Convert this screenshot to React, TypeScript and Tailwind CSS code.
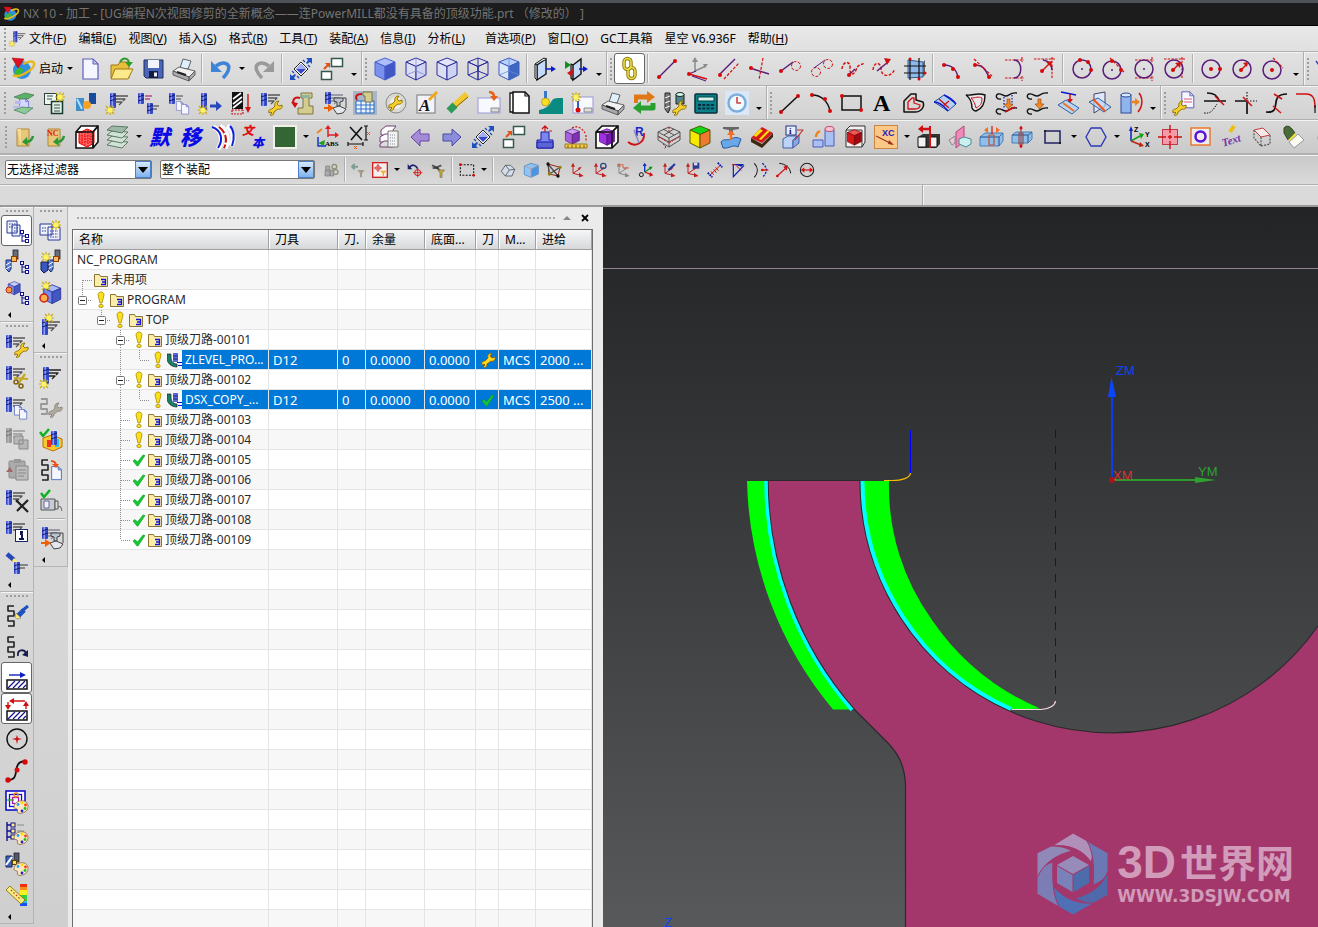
import React from 'react';

/* ---------- drawing primitives for the 24x24 icons ---------- */
type AP = { d: string; c?: string; w?: number; f?: string; dash?: string };
const A = ({ d, c = '#111', w = 1.2, f = 'none', dash }: AP) => (
  <path d={d} stroke={c} strokeWidth={w} fill={f} strokeDasharray={dash} strokeLinejoin="round" />
);
const D = ({ x, y, r = 2, c = '#d80808' }: { x: number; y: number; r?: number; c?: string }) => (
  <circle cx={x} cy={y} r={r} fill={c} />
);
const Sun = ({ x = 0, y = 0 }: { x?: number; y?: number }) => (
  <g transform={`translate(${x} ${y})`}>
    <A d="M0-5V5M-5 0H5M-4-4 4 4M4-4-4 4" c="#c9a800" w={1.1} />
    <circle r="2.6" fill="#fff45a" />
  </g>
);
const Mill = ({ x = 4, y = 2, h = 15, g = false }: { x?: number; y?: number; h?: number; g?: boolean }) => (
  <g>
    <rect x={x} y={y} width="6" height={h} rx="1" fill={g ? '#999' : '#3446c4'} />
    <rect x={x + 1.5} y={y} width="1.6" height={h} fill={g ? '#b4b4b4' : '#8ea0f4'} />
    <path
      d={`M${x} ${y + 4}l6-2M${x} ${y + 8}l6-2`}
      stroke={g ? '#777' : '#141e70'}
      strokeWidth="1"
    />
  </g>
);
const Feed = ({ x = 10, y = 5, c = '#555' }: { x?: number; y?: number; c?: string }) => (
  <A d={`M${x} ${y}h12M${x} ${y + 3}h9l-2 2M${x} ${y + 6}h6l-3 3`} c={c} w={1.3} />
);
const Wrench = ({ x = 0, y = 0, c = '#f4cf2c', s = '#8a6a00' }: { x?: number; y?: number; c?: string; s?: string }) => (
  <path
    transform={`translate(${x} ${y})`}
    d="M1 12c-1-3 1-4 3-4l3-3c-1-3 1-5 4-5l-2 3 2 2 3-1c1 3-2 5-4 4l-4 3c0 3-2 4-4 3l2-2-1-1z"
    fill={c}
    stroke={s}
    strokeWidth=".9"
  />
);
const Cube = ({ t = '#c3cff8', l = '#8397e8', r = '#4357c0', s = '#2a2f9c', k = 1, x = 0, y = 0 }) => (
  <g transform={`translate(${x} ${y}) scale(${k})`} stroke={s} strokeLinejoin="round" strokeWidth="1">
    <path d="M12 1 22 5 12 9.500 2 5z" fill={t} />
    <path d="M2 5v13l10 5V9.500z" fill={l} />
    <path d="M22 5v13l-10 5V9.500z" fill={r} />
  </g>
);
const Page = ({ x = 0, y = 0, k = 1, c = '#5a5fb8', f = '#f5f6ff' }) => (
  <g transform={`translate(${x} ${y}) scale(${k})`}>
    <path d="M1 1h10l5 5v15H1z" fill={f} stroke={c} strokeWidth="1.2" />
    <path d="M11 1v5h5z" fill="#c3c8ee" stroke={c} strokeWidth="1" />
  </g>
);
const Nodes = ({ x = 15, y = 11 }: { x?: number; y?: number }) => (
  <g transform={`translate(${x} ${y})`} stroke="#10108c" fill="#fff">
    <path d="M2 3v9M2 6h4M2 11h4" fill="none" />
    <rect x=".5" y=".5" width="3" height="3" />
    <rect x="5.500" y="4.500" width="3" height="3" />
    <rect x="5.500" y="9.500" width="3" height="3" />
  </g>
);
const Palette = () => (
  <g>
    <path d="M9 17c0-5 6-7 10-6s5 6 3 9-7 4-9 3 1-3-1-4-3 0-3-2z" fill="#fbe6c2" stroke="#8a6840" strokeWidth=".8" />
    <D x={13} y={14.500} r={1.400} c="#20a0f0" /><D x={17} y={13} r={1.400} c="#ffd800" />
    <D x={20.500} y={15} r={1.400} c="#f04010" /><D x={20} y={18.500} r={1.400} c="#20c020" />
    <D x={17} y={21} r={1.400} c="#2020d0" />
  </g>
);
const Holder = ({ x = 0, y = 0 }: { x?: number; y?: number }) => (
  <g transform={`translate(${x} ${y})`}>
    <rect x="8" y="0" width="5" height="9" fill="#666d7c" stroke="#222" strokeWidth=".8" />
    <rect x="6.500" y="6.500" width="5" height="5" fill="#f8b860" stroke="#904000" />
    <path d="M1 10h5v9l-2 3-3-3z" fill="#5a84d8" stroke="#182870" />
    <path d="m1 15 5-3m-5 7 5-3" stroke="#fff" />
  </g>
);
const Machine = ({ x = 0, y = 0 }: { x?: number; y?: number }) => (
  <g transform={`translate(${x} ${y})`} stroke="#333" strokeWidth=".9">
    <path d="M1 2h9v3l-3 1v4H4V6L1 5z" fill="#bcc4d0" />
    <path d="M0 12l6-2 7 3-3 4-6 1z" fill="#e4e8ee" />
    <path d="M10 2h3v10" fill="none" />
  </g>
);
const Axes = ({ c = '#c02020' }: { c?: string }) => (
  <g>
    <A d="M6 4v13l12 3M6 17l9-6" c={c} w={1.500} />
    <path d="m3 7 3-6 3 6zM15 16l7 5-7 2zM13 9l6-2-3 5z" fill={c} />
  </g>
);
const Swirl = () => <A d="M9 2H3v5h6v5H3m6 0H3v5h6v5H3" c="#222" w={1.600} />;
const Hatch = () => (
  <g>
    <rect x="2" y="14" width="20" height="9" fill="#fff" stroke="#111" strokeWidth="1.500" />
    <A d="m3 22 7-7m-2 7 7-7m-2 7 7-7m-2 7 3-3" c="#10108c" w={1.200} />
  </g>
);
const Printer = () => (
  <g stroke="#555" strokeWidth=".9">
    <path d="m8 11 3-9 8 2-3 8z" fill="#dff0fc" />
    <path d="m1 14 6-4 16 4-6 6z" fill="#f1f1f1" />
    <path d="m1 14 16 6v4L1 18zM17 20l6-6v4l-6 6z" fill="#a9a9ae" />
    <path d="m5 15 9 3" stroke="#222" strokeWidth="2" />
  </g>
);
const Fit = () => (
  <g>
    <path d="m12 5 7 7-7 7-7-7z" fill="#fff" stroke="#222" />
    <path d="m12 7 5 5-5 5-5-5z" fill="#3948c8" />
    <path d="M12 7l5 5H7z" fill="#a4b0f0" />
    <path d="M17 1h6v6l-2-2-3 2-1-1 2-3zM7 23H1v-6l2 2 3-2 1 1-2 3z" fill="#2050c0" />
    <A d="m14 3 2 2M19 8l2 2M3 14l2 2M8 19l2 2" c="#2050c0" w={1.300} />
  </g>
);
const Win = () => (
  <g>
    <rect x="11.500" y="1.500" width="11" height="8" fill="#fff" stroke="#34584c" strokeWidth="1.500" />
    <rect x="1.500" y="14.500" width="10" height="8" fill="#fff" stroke="#34584c" strokeWidth="1.500" />
    <A d="m4 12 4-4" c="#e05010" w={2} /><path d="M5 6h5v5z" fill="#e05010" />
  </g>
);
const RedCorner = ({ box = false }: { box?: boolean }) => (
  <A d={box ? 'M3 3h19M3 21h19M20 0v5M20 19v5' : 'M1 2h21M19 0v22'} c="#d01010" w={1.100} dash="2.500 1.200" />
);
type CP = { t: string; c?: string; s?: number; x?: number; y?: number; f?: string };
const Char = ({ t, c = '#0a0ae6', s = 22, x = 1, y = 20, f = '"Noto Sans CJK SC"' }: CP) => (
  <text x={x} y={y} fontSize={s} fontWeight="900" fill={c} fontStyle="italic" style={{ fontFamily: f + ', serif' }}>{t}</text>
);

const P = '#5a1c78';
const R = '#d01010';
const ICON: Record<string, React.ReactNode> = {
  nx: <g><circle cx="11" cy="13" r="9" fill="#2f8fe0" /><path d="M5 13c3-4 8-2 7 1s-5 3-4 7c-4-1-6-5-3-8z" fill="#39b838" /><A d="M2 18c5 4 23-6 21-12-1-3-7-1-11 1" c="#e8b818" w={2.500} /><path d="m1 1 12 1-6 9z" fill="#e01020" stroke="#900" strokeWidth=".5" /></g>,
  new: <Page x={3} y={1} />,
  open: <g><path d="M1 8h7l2-3h9v16H1z" fill="#e7bf3c" stroke="#a07810" /><path d="M5 12h18l-5 10H1z" fill="#fbe98c" stroke="#a07810" /><A d="M10 5c3-5 8-4 9 0" c="#2e9c28" w={2} /><path d="M15 5h8l-4 5z" fill="#2e9c28" /></g>,
  save: <g><path d="M3 3h19v18H5l-2-2z" fill="#4b66b8" stroke="#1c2c5c" /><rect x="7" y="3" width="11" height="8" fill="#f2f4fc" /><rect x="8" y="14" width="9" height="7" fill="#111c40" /><rect x="13" y="15.500" width="3" height="4" fill="#eee" /></g>,
  print: <Printer />,
  undo: <g><A d="M7 9c8-6 15-2 12 5-1 3-3 5-5 7" c="#3d83d8" w={3.500} /><path d="M2 4v11h11z" fill="#3d83d8" /></g>,
  redo: <g><A d="M17 9C9 3 2 7 5 14c1 3 3 5 5 7" c="#9a9a9a" w={3.500} /><path d="M22 4v11H11z" fill="#9a9a9a" /></g>,
  fit: <Fit />,
  win: <Win />,
  cube1: <Cube t="#aebefa" l="#7a91ee" r="#4257c4" s="#4660d0" />,
  cube2: <g><Cube t="#e3e4f8" l="#dcdef4" r="#cfd3ef" /><A d="M2 18l10-4 10 4M12 14V1" c="#8a8ad0" w={.8} /></g>,
  cube3: <Cube t="#e3e4f8" l="#dcdef4" r="#cfd3ef" />,
  cube4: <g><Cube t="none" l="none" r="none" /><A d="M2 18l10-4 10 4M12 14V1" c="#2a2f9c" w={1} /></g>,
  cube5: <g><Cube t="#b7d2fa" l="#dbe8fc" r="#3e68c0" s="#3a5cc0" /><A d="M2 18l10-4 10 4M12 14V1" c="#6a8ad8" w={.8} /></g>,
  door: <g><path d="M3 8l9-6v15l-9 6z" fill="#c5d9fb" stroke="#111" strokeWidth="1.400" /><path d="M3 8 1 7v14l2 2zM12 2l-2-1-9 6" fill="#fff" stroke="#111" /><A d="M12 12h8" c="#0a18c8" w={1.500} /><path d="m17 9 5 3-5 3z" fill="#0a18c8" /></g>,
  door2: <g><path d="M8 8l8-6v15l-8 6z" fill="#c5d9fb" stroke="#111" strokeWidth="1.400" /><A d="M8 8 6 7v14l2 2" /><A d="M14 12h7" c="#0a18c8" w={1.500} /><path d="m18 9 5 3-5 3z" fill="#0a18c8" /><path d="m0 4 6 4-6 4z" fill="#109020" /><path d="m8 12-6 4 5 4z" fill="#d81010" /></g>,
  chain: <g fill="none" stroke="#8c7c08" strokeWidth="3.400"><rect x="6" y="1.500" width="7" height="11" rx="3.500" /><rect x="10" y="10.500" width="7" height="11" rx="3.500" /><g stroke="#ece04c" strokeWidth="1.500"><rect x="6" y="1.500" width="7" height="11" rx="3.500" /><rect x="10" y="10.500" width="7" height="11" rx="3.500" /></g></g>,
  line: <g><A d="M4 20 20 4" c={P} w={1.500} /><D x={4} y={20} /><D x={20} y={4} /></g>,
  axl: <g><A d="M9 14V3M9 14l11-5" c="#8c8c8c" w={1.500} /><path d="m6 5 3-5 3 5zM17 7l5 0-3 4z" fill="#8c8c8c" /><A d="m3 17 18 5" c={R} w={1.500} /><A d="m6 19 14 5M3 17l7-3" c={P} /><D x={3} y={17} /></g>,
  para: <g><A d="M2 18 18 2" c={P} w={1.500} /><A d="M7 22 22 6" c={R} dash="3 1.500" /><D x={3} y={18} /></g>,
  perp: <g><A d="M2 11l19 6" c={P} w={1.500} /><A d="M15 1 11 23" c={R} dash="3 1.500" /><D x={3} y={11} /></g>,
  tanc: <g><circle cx="17" cy="9" r="4.500" fill="none" stroke={R} strokeDasharray="3 1.500" /><A d="M2 14 14 5" c={P} w={1.500} /><D x={2} y={14} /></g>,
  tan2: <g stroke={R} fill="none" strokeDasharray="3 1.500"><circle cx="6" cy="15" r="4.500" /><circle cx="18" cy="7" r="4.500" /><path d="M4 11 15 3" stroke={P} strokeDasharray="none" /></g>,
  cur1: <g><A d="M1 12C2 3 10 4 9 11s4 8 6 2 4-4 8-7" c={R} dash="3 1.500" w={1.400} /><A d="m8 18 6-6" c={P} w={1.500} /><D x={8} y={18} /></g>,
  cur2: <g><A d="M1 13C2 4 9 5 9 12s9 10 14 0" c={R} dash="3 1.500" w={1.400} /><A d="m5 14 11-9" c={P} w={1.500} /><path d="m12 1 7 1-4 6z" fill={R} /></g>,
  mesh: <g><path d="M5 3l15 2v15L5 21z" fill="#8fb9ea" stroke="#335a90" /><path d="M20 5l2-2v15l-2 2z" fill="#666" /><A d="M7 1v22M16 1v22M1 9h22M1 16h22" c="#111" /><D x={7} y={2} r={1.500} /><D x={16} y={22} r={1.500} /><D x={22} y={16} r={1.500} /></g>,
  arc3: <g><A d="M4 8c8 0 13 5 14 13" c={P} w={1.500} /><D x={4} y={8} /><D x={13} y={12} /><D x={18} y={20} /></g>,
  arct: <g><A d="M4 8c8 0 11 5 14 12" c={P} w={1.500} /><A d="m3 2 18 17" c={R} dash="3 1.500" /><D x={4} y={8} /><D x={18} y={20} /></g>,
  arcb: <g><RedCorner box /><A d="M12 3c9 0 9 18 0 18" c={P} w={1.500} /></g>,
  arcr: <g><RedCorner /><A d="M10 3c6 1 9 4 9 10" c={P} w={1.500} /><A d="m9 14 7-7" c={R} w={1.500} /><D x={9} y={14} /><path d="m13 5 6-1-1 6z" fill={R} /></g>,
  c3: <g><circle cx="12" cy="12" r="9" fill="none" stroke={P} strokeWidth="1.500" /><D x={10} y={3} /><D x={18} y={5} /><D x={21} y={13} /><D x={12} y={12} r={1} c={P} /></g>,
  ct: <g><circle cx="11" cy="13" r="9" fill="none" stroke={P} strokeWidth="1.500" /><A d="M9 1l14 14" c={R} dash="3 1.500" /><D x={11} y={4} /><D x={20} y={13} /><D x={11} y={13} r={1} c={P} /></g>,
  cb: <g><RedCorner box /><circle cx="12" cy="12" r="9" fill="none" stroke={P} strokeWidth="1.500" /><D x={12} y={12} r={1} c={P} /></g>,
  cr: <g><RedCorner /><circle cx="11" cy="12" r="9" fill="none" stroke={P} strokeWidth="1.500" /><A d="m10 13 7-7" c={R} w={1.500} /><D x={10} y={13} /><path d="m12 6 6-1-1 6z" fill={R} /></g>,
  cc: <g><circle cx="11" cy="12" r="9" fill="none" stroke={P} strokeWidth="1.500" /><D x={11} y={12} /><D x={20} y={12} /></g>,
  cd: <g><circle cx="11" cy="12" r="9" fill="none" stroke={P} strokeWidth="1.500" /><D x={10} y={13} /><A d="m11 12 5-5" c={R} w={1.500} /><path d="m12 6 5-1-1 5z" fill={R} /></g>,
  ce: <g><circle cx="10" cy="13" r="9" fill="none" stroke={P} strokeWidth="1.500" /><D x={10} y={13} /><A d="m11 1 10 10" c={R} dash="3 1.500" /></g>,
  pen: <A d="M1 4l5 7 2 10M6 11l8-6" c="#3848b0" w={1.500} />,

  refresh: <g><Page x={7} y={7} k={.6} c="#5a5fd8" f="#d7d8ff" /><path d="M2 6l11-4 9 2-6 4H8z" fill="#5fae6a" stroke="#2f6e3a" strokeWidth=".6" /><path d="M2 19l8-3 11 1-8 6z" fill="#8fc89a" stroke="#2f6e3a" strokeWidth=".6" /><path d="M3 10h6v3H3zM1 15h7v2H1z" fill="#b8b8f0" /></g>,
  grids: <g><rect x="1.500" y="2.500" width="12" height="11" fill="#eef4ee" stroke="#30403c" /><rect x="8.500" y="10.500" width="11" height="12" fill="#e3efe6" stroke="#14382c" strokeWidth="1.500" /><A d="M4 5h6M4 8h5M11 14h6M11 17h6M11 20h6" c="#30504a" /><Sun x={17} y={6} /></g>,
  toolcol: <g><path d="M2 7h8v13H2z" fill="#3f8ec8" /><path d="M15 2h7v11h-7z" fill="#174c9c" /><path d="M3 8l5 10" stroke="#b0e0ff" strokeWidth="2" /><circle cx="13" cy="14" r="4" fill="#f8a020" /></g>,
  mill1: <g><Mill x={5} /><Feed x={11} y={5} /><Sun x={5} y={19} /></g>,
  mill2: <g><Mill x={2} h={11} /><A d="M9 5h7M9 8h5" c="#a06" /><Mill x={11} y={12} h={11} /><A d="M17 15h6M17 18h4" c="#333" /></g>,
  mill3: <g><Mill x={2} h={11} /><A d="M9 5h7M9 8h5" c="#444" /><Page x={9} y={10} k={.45} /><Page x={14} y={13} k={.48} /></g>,
  mill4: <g><Mill x={3} y={2} h={17} /><Sun x={5} y={19} /><A d="M12 15h8" c="#2848c0" w={3} /><path d="m18 10 6 5-6 5z" fill="#2848c0" /></g>,
  zig: <g><rect x="3" y="1" width="11" height="17" fill="#111" /><A d="m4 8 8-6M4 13l9-7M4 17l9-7" c="#fff" w={1.600} /><A d="M3 19v4h11v-4M3 19h11" c={R} dash="2 1" /><A d="M19 3v15" c={R} w={1.400} /><path d="m16 16 6 0-3 6z" fill={R} /></g>,
  millw: <g><Mill x={1} h={13} /><Feed x={8} y={4} /><Wrench x={8} y={10} /></g>,
  mach1: <g><path d="M10 2h11v5h-3v8h4v8H7v-6h5V7h-2z" fill="#d5cd90" stroke="#7a7440" /><rect x="11" y="4" width="8" height="3" fill="#88b6a0" /><A d="M9 7c-6-2-8 3-6 6" c={R} w={2} /><path d="m0 11 7 1-3 5z" fill={R} /></g>,
  mach2: <g><Mill x={3} y={1} h={12} /><Feed x={9} y={4} c="#889" /><Machine x={11} y={5} /><A d="M2 17h6" c="#f06000" w={2} /><path d="m6 13 6 4-6 4z" fill="#f06000" /></g>,
  mach3: <g><rect width="24" height="24" fill="#a9b6c8" /><path d="M3 10h18v12H3z" fill="#eaf2ff" stroke="#2468c0" /><A d="M3 14h18M3 18h18M8 10v12M13 10v12M17 10v12" c="#2468c0" w={.9} /><path d="M10 1h9v10h-7V5h-2z" fill="#d5cd90" stroke="#7a7440" /><A d="M9 3C3 3 2 6 4 9" c={R} w={2} /></g>,
  gearw: <g><circle cx="12" cy="12" r="10" fill="#d9d9d4" stroke="#888" /><circle cx="12" cy="12" r="6" fill="#eee" /><Wrench x={4} y={5} /></g>,
  annot: <g><rect x="2" y="4" width="18" height="18" fill="#f3f3fb" stroke="#777" /><Char t="A" c="#111" s={17} x={4} y={20} f='"Liberation Serif"' /><A d="m14 9 8-8" c="#f0a818" w={3} /></g>,
  eraser: <g><A d="M8 15 21 3" c="#f0c830" w={6} /><A d="m3 20 6-6" c="#2d9a58" w={7} /><A d="M10 16 22 6" c="#806010" w={1} /></g>,
  dwg: <g><rect x="1" y="7" width="22" height="15" fill="#f8f8ff" stroke="#9898d8" /><path d="M14 17h8v4h-8z" fill="#ddd" stroke="#777" strokeWidth=".8" /><A d="M12 1c4 0 5 2 5 5" c="#e86010" w={2.500} /><path d="m13 5 8 0-4 5z" fill="#e86010" /></g>,
  pages: <g><path d="M2 2h12v19H2z" fill="#fff" stroke="#111" strokeWidth="1.300" /><path d="M5 1h12l4 4v17H5z" fill="#fff" stroke="#111" strokeWidth="1.500" /><A d="M17 1v4h4" /></g>,
  teal: <g><path d="M0 23V19c6-1 10-4 12-8s4-4 12-4v16z" fill="#0a8a80" /><path d="M5 0h3v8H5z" fill="#3a78c8" /><circle cx="6.500" cy="11" r="4" fill="#f8e020" stroke="#a08000" strokeWidth=".6" /></g>,
  sunpg: <g><rect x="3" y="6" width="20" height="16" fill="#f8f8ff" stroke="#9898d8" /><Sun x={6} y={6} /><path d="M14 17h8v4h-8z" fill="#ddd" stroke="#777" strokeWidth=".8" /><A d="M8 10v8" c="#3060d0" w={2} /><D x={8} y={19} r={2.500} /></g>,
  swap: <g><A d="M2 6h14" c="#e07818" w={5} /><path d="m15 0 8 6-8 6z" fill="#e07818" /><path d="M2 6v6h4V6z" fill="#e07818" /><A d="M8 17h13v-5" c="#2aa030" w={5} /><path d="m9 10-8 7 8 6z" fill="#2aa030" /></g>,
  tools: <g><path d="M2 2h5v16l-2 4-3-4z" fill="#777" stroke="#222" /><path d="m2 7 5-2m-5 7 5-2m-5 7 5-2" stroke="#fff" /><path d="M13 3h8v10h-8z" fill="#50848c" stroke="#222" /><ellipse cx="17" cy="3.500" rx="4" ry="2" fill="#cfe" stroke="#222" /><Wrench x={9} y={10} /></g>,
  calc: <g><rect x="1" y="3" width="22" height="19" rx="1" fill="#0c8088" stroke="#06303c" strokeWidth="1.500" /><rect x="4" y="6" width="16" height="4" fill="#d4f0ec" stroke="#044" /><A d="M4 14h16M4 17.500h16" c="#062c40" w={2.200} dash="3 1.300" /></g>,
  clock: <g><rect width="24" height="24" fill="#dbe6f6" /><circle cx="12" cy="12" r="8.500" fill="#f4fbff" stroke="#7cb0dc" strokeWidth="2.500" /><A d="M12 6v6h4" c="#d04040" w={1.600} /></g>,
  bline: <g><A d="M3 21 20 5" c="#111" w={1.500} /><D x={3} y={21} /><D x={20} y={5} /></g>,
  barc: <g><A d="M3 4c9 0 16 6 18 16" c="#111" w={1.500} /><D x={3} y={4} /><D x={16} y={8} /><D x={21} y={20} /></g>,
  brect: <g><rect x="2" y="5" width="19" height="14" fill="none" stroke="#111" strokeWidth="1.500" /><D x={2} y={5} /><D x={21} y={19} /></g>,
  bigA: <text x="2" y="20" fontSize="24" fontWeight="700" style={{ fontFamily: '"Liberation Serif", serif' }}>A</text>,
  off1: <g><A d="M2 21V10l7-7h5v6l7 2c2 5-2 10-8 10z" w={1.500} /><A d="M6 18v-7l4-4h2v5l6 2c0 3-2 4-5 4z" c={R} w={1.300} /></g>,
  off2: <g><path d="M1 11 11 4l12 9-8 7z" fill="#b3d2f6" stroke="#2050a0" /><A d="M1 11c6 0 10 4 14 9M11 4c5 2 9 5 12 9" c="#0a18d0" w={1.500} /><A d="m6 8 10 9M10 15l6-5" c={R} w={1.400} /></g>,
  off3: <g><path d="M2 4c7 1 11-3 19 0 0 9-3 14-9 16-1 0-3-1-4-3 0-5-2-10-6-13z" fill="#e6e6ec" stroke="#111" strokeWidth="1.400" /><path d="M7 7c5 0 7-2 11 0 0 6-2 8-6 10-1-4-2-7-5-10z" fill="none" stroke={R} /></g>,
  pj1: <g><A d="M6 8C1 9 0 4 3 3s5 2 8 2 4-4 11-3M6 23c-5 1-6-4-3-5s5 2 8 2 4-4 11-3" w={1.400} /><A d="M9 6v12M17 4v13" c="#1010c0" dash="1.500 1.500" /><path d="M12 8h3v5h3l-4.500 5L9 13h3z" fill="#f08a20" stroke="#904000" strokeWidth=".6" /><A d="m10 21 10-5" c={R} w={1.500} /></g>,
  pj2: <g><A d="M6 8C1 9 0 4 3 3s5 2 8 2 4-4 11-3M6 23c-5 1-6-4-3-5s5 2 8 2 4-4 11-3" w={1.400} /><path d="M12 8h3v5h3l-4.500 5L9 13h3z" fill="#f08a20" stroke="#904000" strokeWidth=".6" /></g>,
  sf1: <g><path d="M1 14 9 9l13 8-7 6z" fill="#b9d4f4" stroke="#3060a0" /><A d="m4 1 15 3" c="#0a18d0" w={1.600} /><A d="M13 3v7" c={R} w={1.500} /><path d="m10 8 6 0-3 4z" fill={R} /><A d="m6 12 11 8" c="#f07020" w={2} /></g>,
  sf2: <g><path d="M6 3l11-2v14L6 22z" fill="#dde8f8" stroke="#446" /><path d="M1 11l9-4 13 9-7 5z" fill="#b9d4f4aa" stroke="#3060a0" /><A d="m5 8 12 12" c="#f05010" w={1.800} /></g>,
  wrapc: <g><rect x="2" y="4" width="10" height="18" fill="#8fb4ee" stroke="#2a4a98" /><ellipse cx="7" cy="4" rx="5" ry="2" fill="#dceaff" stroke="#2a4a98" /><A d="M12 11h6" c="#f08020" w={2.500} /><path d="m16 7 5 4-5 4z" fill="#f08020" /><A d="M20 2c4 5 4 13-1 19" c={R} w={1.500} /></g>,
  wpage: <g><Page x={9} y={0} k={.8} /><A d="M12 8h8M12 11h8" c="#e06070" /><Wrench x={0} y={10} /></g>,
  tr1: <g><A d="M4 2c7 0 10 2 13 9M1 10h22" w={1.600} /><A d="M1 22c7 1 9-3 13-9" dash="1.500 1.200" w={1} /><A d="m12 5 9 9" c={R} w={1.500} /></g>,
  tr2: <g><A d="M1 10h12M13 10v13" w={1.700} /><A d="M13 1v9h10" dash="1.500 1.500" /><A d="m9 6 9 9" c={R} w={1.500} /></g>,
  tr3: <g><A d="M1 21c18 2 1-18 21-18" w={1.700} /><A d="m9 3 8 5M8 15l8 7" c={R} w={1.500} /></g>,
  tr4: <g><A d="M0 3h10c8 0 9 6 9 14" c={R} w={1.500} /><A d="M19 14v8" /></g>,

  fold1: <g><path d="M4 4h12v17H4z" fill="#e8c878" stroke="#b08838" /><path d="M4 4h4v17" fill="#f4dc98" /><A d="M20 11c-1 5-4 6-8 6" c="#289838" w={2.500} /><path d="m14 12-5 5 6 4z" fill="#289838" /></g>,
  fold2: <g><path d="M4 4h12v17H4z" fill="#e8c878" stroke="#b08838" /><text x="3" y="11" fontSize="8" fontWeight="700" fill="#e02010" style={{ fontFamily: '"Liberation Serif", serif' }}>NC</text><A d="M20 11c-1 5-4 6-8 6" c="#289838" w={2.500} /><path d="m14 12-5 5 6 4z" fill="#289838" /></g>,
  redbox: <g><path d="M1 7h17v16H1zM1 7l5-6h17v16l-5 6M18 7l5-6" fill="#fff" stroke="#111" strokeWidth="1.600" /><path d="m4 8 8-4 7 3v11l-7 4-8-4z" fill="#ff6868" stroke="#e00" /><A d="M7 7v12M10 6v14M13 5v17M16 6v14M4 11h15M4 14h15M4 17h15" c="#e00" w={1} dash="1.500 1" /><A d="M1 7h17v16M18 7l5-6" w={1.400} /></g>,
  layers: <g stroke="#50705a" strokeWidth=".9" fill="#cfe2d4"><path d="m1 20 5-4 16 1-6 6z" /><path d="m1 15 5-4 16 1-6 6z" /><path d="m1 10 5-4 16 1-6 6z" /><path d="m1 5 5-4 16 1-6 6z" fill="#9db8a8" /></g>,
  mo: <Char t="默" s={21} x={0} y={20} />,
  yi: <Char t="移" s={21} x={0} y={20} />,
  ribs: <g><path d="M2 2c9 3 11 14 5 22M9 1c8 5 9 15 5 22M16 1c6 4 8 12 4 20" fill="none" stroke="#fff" strokeWidth="5" /><A d="M1 2c9 3 12 12 6 21M19 1c4 4 5 12 2 20" c="#1020d8" w={2} /><A d="M8 2c7 5 9 13 5 21" c={R} w={2} dash="8 2" /></g>,
  wenben: <g><Char t="文" c="#e01010" s={12} x={0} y={10} /><Char t="本" s={12} x={10} y={22} /></g>,
  green: <g><rect width="24" height="24" fill="#f2f0e8" /><rect x="2" y="2" width="20" height="20" fill="#346534" /></g>,
  abs: <g><A d="M12 12V2M12 10h9" c="#e02020" w={1.500} /><A d="M2 12v9h8" c="#1030d8" w={1.500} /><path d="m9 4 3-4 3 4zM19 7l4 3-4 3z" fill="#e02020" /><path d="m2 18 7-3-1 6z" fill="#20a020" /><path d="m1 8 5-4" stroke="#f08020" strokeWidth="2" /><text x="9" y="21" fontSize="7" fontWeight="700" style={{ fontFamily: '"Liberation Serif", serif' }}>ABS</text></g>,
  xdim: <g><A d="M3 2l12 13M15 2 4 15" w={1.600} /><A d="M19 1v14M17 1h4M17 15h4M1 19h15M1 17v4M16 17v4" w={1.200} /><A d="m20 7 3 3m0-3-3 3M7 21l3 3m0-3-3 3" c="#e06020" w={1} /></g>,
  books: <g><path d="M3 5l5-4h10l-3 4v5H3z" fill="#fff" stroke="#704070" /><path d="M2 12l5-3h9l-2 4v4H2z" fill="#fff" stroke="#704070" /><path d="M2 19l4-3h9v6H2z" fill="#ddd" stroke="#704070" /><path d="M10 6h10v16H10z" fill="#f4f4ee" stroke="#777" /><A d="M12 10h6M12 13h6M12 16h6M12 19h6" c="#88a" dash="1 1" /></g>,
  left: <path d="M2 12 11 4v5h9v7h-9v5z" fill="#a58ad8" stroke="#6848a8" />,
  right: <path d="M21 12 12 4v5H3v7h9v5z" fill="#8c8cdc" stroke="#4848a0" />,
  pillar: <g><path d="M8 7h8v8h4v8H4v-8h4z" fill="#7c86ee" stroke="#1a1aa8" /><path d="M4 17h16v6H4z" fill="#5a66d8" stroke="#1a1aa8" /><A d="M12 7V2M9 4l3-3 3 3M16 6h3" c={R} w={1.200} /></g>,
  cubeR: <g><Cube t="#d0a0f0" l="#a860d8" r="#8030b0" s="#502080" k={.7} x={0} y={3} /><path d="M1 19h22v4H1z" fill="#f0cc50" stroke="#906800" strokeWidth=".8" /><A d="M4 20v3M8 20v3M12 20v3M16 20v3M20 20v3" c="#704800" w={.8} /><A d="M8 3c5-3 10 0 13 5M22 10v6" c={R} dash="2 1.500" /></g>,
  purp: <g><path d="M1 7h16v16H1zM1 7l6-6h16v16l-6 6M17 7l6-6" fill="#fff" stroke="#111" strokeWidth="1.600" /><Cube t="#c058f0" l="#a030e0" r="#7818b0" s="#501080" k={.75} x={3} y={3} /><A d="M1 7h16v16M17 7l6-6" w={1.300} /></g>,
  rarc: <g><text x="9" y="11" fontSize="12" fontWeight="700" fill="#1828c8" style={{ fontFamily: '"Liberation Sans", sans-serif' }}>R</text><A d="M2 17c7 6 17 1 16-9" c={R} w={1.800} /><A d="M8 5l5 13" c="#8888c8" w={1.500} /></g>,
  wirec: <g><A d="m12 2 11 5-11 6L1 7zM1 7v8l11 7 11-7V7M12 13v9M1 11l11 6 11-6M6 4l11 6M17 4 7 10" c="#444" w={.9} /><A d="m2 12 10 6 10-6M9 22l-3-3m3 3-2 2M12 2v4" c={R} w={1} dash="2 1" /></g>,
  ygc: <Cube t="#10d818" l="#f8e800" r="#f07830" s="#506000" />,
  vise: <g><path d="M2 17c3-4 6-1 10-3s6-2 10 0l-3 8c-5-3-9 2-15 1z" fill="#68a8e8" stroke="#2858a0" /><path d="M4 2h16v2l-6 1v3h-4V5L4 4z" fill="#666" /><A d="M12 15V7" c="#f07020" w={2.500} /><path d="m8 10 4-5 4 5z" fill="#f07020" /></g>,
  swatch: <g><path d="m1 13 11-11 11 6L12 18z" fill="#d81818" /><path d="M3.500 10.500 10 4l3 1.500L6 12zM9 14 18 5l2 1-9 9z" fill="#f8e010" /><path d="m1 13 11 6L23 8v4L12 23 1 17z" fill="#3a2a10" /></g>,
  info: <g><path d="M2 14l5-3h9l-4 4v8H2z" fill="#bcd2f6" stroke="#4060a8" /><path d="M12 15l6-5v8l-6 5z" fill="#88a8e0" stroke="#4060a8" /><rect x="5" y="1" width="10" height="9" fill="#e8ecff" stroke="#203080" /><text x="8" y="9" fontSize="9" fontWeight="700" fill="#10104c" style={{ fontFamily: '"Liberation Serif", serif' }}>i</text><A d="M16 5h6l-8 10" c="#c03030" /></g>,
  cylm: <g><path d="M13 5h9v16h-9z" fill="#a8c0f4" stroke="#4a5cb8" /><ellipse cx="17.500" cy="4" rx="4.500" ry="2.500" fill="#f8c0d0" stroke="#c04060" /><path d="M1 15h10v7H1z" fill="#a8c0f4" stroke="#4a5cb8" /><A d="M4 12c0-4 2-5 4-6" c="#f08020" w={2.500} /></g>,
  redc: <g><path d="M3 5h16v17H3zM3 5l4-4h15v16l-3 5" fill="#f8f0f0" stroke="#333" /><Cube t="#f05858" l="#d81818" r="#a00810" s="#700" k={.7} x={3} y={4} /></g>,
  xc: <g><rect x=".5" y=".5" width="23" height="23" fill="#fcc888" stroke="#c88840" /><text x="8" y="11" fontSize="9" fontWeight="700" fill="#1818c0" style={{ fontFamily: '"Liberation Sans", sans-serif' }}>XC</text><A d="m2 11 16 8" c="#a03020" w={1.200} /><path d="m15 15 5 5-6-1z" fill="#a03020" /></g>,
  trm: <g><path d="M1 12l5-3h17v10l-4 4H1z" fill="#333" /><path d="M1 12h8v10H1z" fill="#f2f2f2" stroke="#111" /><path d="M13 12h7v10h-7z" fill="#f2f2f2" stroke="#111" /><A d="M3 4h9" c={R} w={2.500} /><path d="M6 0 1 4l5 4zM12 1h2v22h-2z" fill={R} /></g>,
  mir1: <g><path d="M8 7l8-6v15l-8 7z" fill="#f088b8" stroke="#b04878" /><path d="M1 15l6-4v7l-3 2z" fill="#e8c8d8" stroke="#888" /><path d="M11 14l5-2 7 2v5l-5 3-7-3z" fill="#c8f0ee" stroke="#4a8a90" /></g>,
  mir2: <g><path d="M1 12l5-4h18l-4 4zM1 12h19v9H1zM20 12l4-4v8l-4 5z" fill="#90c0ea" stroke="#3868a8" strokeWidth=".8" /><A d="M10 10h5v10h-5z" c="#c05030" /><A d="M13 1v8" c={R} /><path d="m5 5 4-3v6zM21 5l-4-3v6z" fill="#f07020" /></g>,
  mir3: <g><path d="M2 10l4-3h16l-4 3zM2 10h16v8H2zM18 10l4-3v7l-4 4z" fill="#90c0ea" stroke="#3868a8" strokeWidth=".8" /><A d="M9 8h4v11H9zM11 1v22" c="#905050" /><D x={11} y={3} r={1.500} /><D x={11} y={21} r={1.500} /></g>,
  rect: <g><rect x="4" y="6" width="15" height="12" fill="none" stroke="#202060" strokeWidth="1.500" /><rect x="3" y="5" width="2" height="2" fill="#222" /><rect x="18" y="17" width="2" height="2" fill="#222" /></g>,
  hex: <A d="M7 3h10l5 9-5 9H7l-5-9z" c="#2838b8" w={1.400} />,
  xyz: <g><A d="M4 16V4" c="#1020c0" w={1.500} /><path d="m2 6 2-5 2 5z" fill="#1020c0" /><A d="m4 16 9-5" c="#18a018" w={1.500} /><path d="m12 8 5 1-3 5z" fill="#18a018" /><A d="m4 16 10 4" c="#c02010" w={1.500} /><path d="m13 17 4 4-5 1z" fill="#c02010" /><g fontSize="7" fontWeight="700" style={{ fontFamily: '"Liberation Sans", sans-serif' }}><text x="7" y="7">Z</text><text x="18" y="12">Y</text><text x="18" y="22">X</text></g></g>,
  ctr: <g><rect x="4.500" y="4.500" width="15" height="15" fill="#f49aa8" stroke="#c03848" /><A d="M12 0v8M12 10v4M12 16v8M0 12h8M10 12h4M16 12h8" c={R} w={1.400} /></g>,
  ring: <g><rect x="2" y="3" width="19" height="17" fill="#ececec" stroke="#f06818" strokeWidth="1.300" /><circle cx="11.500" cy="11.500" r="5" fill="none" stroke="#5a10d8" strokeWidth="2.500" /></g>,
  text: <g><text x="1" y="20" fontSize="11" fontWeight="700" fontStyle="italic" fill="#7030a8" transform="rotate(-18 8 14)" style={{ fontFamily: '"Liberation Serif", serif' }}>Text</text><A d="m10 7 4-6" c="#e8c010" w={4} /></g>,
  wire2: <g><path d="m3 5 9-2 7 7-9 2z" fill="#f8e8e8" stroke="#c04040" /><A d="M3 5v8l7 8V12M10 21l9-2v-9" c="#555" dash="2 1.200" /></g>,
  lamp: <g><path d="M2 3c2-3 6-2 8 1l3 4-7 7-4-7z" fill="#4a6a3a" stroke="#304828" /><path d="m13 8-7 7 4 2 6-5z" fill="#f0e040" /><path d="m16 9-9 8 5 6 10-8z" fill="#fbfaf0" stroke="#999" /></g>,
  clip: <circle cx="12" cy="13" r="6" fill="none" stroke="#444" strokeWidth="2.500" />,

  g1: <g><path d="M4 6h6v6H4zM3 13h7v8H3zM11 12h5v9h-5z" fill="#aaa" stroke="#777" /><circle cx="17" cy="7" r="3.500" fill="none" stroke="#8f8f78" strokeWidth="2" /><circle cx="19" cy="15" r="3.500" fill="none" stroke="#8f8f78" strokeWidth="2" /></g>,
  g2: <g><A d="M12 7H3l4-4M3 7l4 4" c="#7d9c98" w={3} /><path d="M11 12h11l-4 5v6h-3v-6z" fill="#a09c88" /></g>,
  rf: <g><rect x="1" y="1" width="22" height="22" fill="#f4eeee" stroke="#d02020" strokeWidth="2" /><circle cx="9" cy="9" r="3.500" fill="none" stroke={R} /><A d="M9 3v12M3 9h12" c={R} /><path d="M12 13h10l-4 4v5h-2v-5z" fill="#f0b020" /></g>,
  snap1: <g><A d="M4 8c3-5 9-4 12 2" c="#18206c" w={2.500} /><path d="M1 3v8h7z" fill="#18206c" /><circle cx="16" cy="16" r="4.500" fill="none" stroke={R} strokeWidth="1.500" /><A d="M16 9v14M9 16h14" c={R} /></g>,
  snap2: <g><A d="M3 5l7 3 7-3M10 8l7 7" c="#555" w={3} /><A d="M4 9h8" c="#222" w={2} /><path d="M12 12h10l-4 4v7h-3v-7z" fill="#d0a838" stroke="#777040" /></g>,
  selr: <g><rect x="2" y="4" width="20" height="16" fill="none" stroke="#111" strokeWidth="1.600" strokeDasharray="3 2" /><D x={2} y={4} /><D x={22} y={20} /></g>,
  sm1: <g><path d="M2 14l6-9h8l6 6-4 10H8z" fill="#d2dcec" stroke="#333" /><path d="M8 5l6 7-6 9M14 12l8-1" fill="none" stroke="#333" /></g>,
  sm2: <g><path d="M2 6l10-4 11 3v13l-11 5-10-4z" fill="#8cc4f4" stroke="#4080c0" /><path d="M12 10l11-5v13l-11 5z" fill="#4c94e0" /><path d="M2 6l10 4 11-5M12 10v13" fill="none" stroke="#e09090" /></g>,
  sm3: <g><A d="M3 3l18 5-3 13L5 18z" c="#a02020" w={1.500} /><A d="M3 3l15 18M21 8 5 18M3 3l2 15" c="#444" w={1.800} /><D x={3} y={3} r={2.500} c="#111" /><D x={21} y={8} r={2.500} c="#908010" /><D x={18} y={21} r={2.500} c="#111" /><D x={5} y={18} r={2.500} c="#908010" /></g>,
  sa1: <Axes />,
  sa2: <g><Axes /><circle cx="17" cy="6" r="4" fill="none" stroke="#304888" strokeWidth="2" /></g>,
  sa3: <g><Axes c="#888" /><A d="M3 4h9v5M12 9h9" c="#e06040" w={1.600} /></g>,
  sa4: <g><A d="M10 15V3" c="#1030c0" w={2} /><path d="m7 6 3-5 3 5z" fill="#1030c0" /><A d="m10 15 9-6" c="#109020" w={2} /><path d="m16 7 6 0-3 5z" fill="#109020" /><A d="m10 15 10 4" c={R} w={2} /><path d="m18 15 5 5-6 2z" fill={R} /><circle cx="5" cy="19" r="3" fill="none" stroke="#111" strokeWidth="1.500" /></g>,
  sa5: <g><Axes /><A d="m11 12 10-9" c="#2038a8" w={3} /></g>,
  sa6: <g><Axes /><rect x="13" y="1" width="10" height="9" fill="#303c90" /><rect x="15" y="1" width="5" height="4" fill="#dde" /></g>,
  ms1: <g><A d="M4 20 20 5M6 14l4 5M10 11l4 5M13 8l4 5" c={R} w={1.500} /><A d="m1 16 7 7M16 1l7 7" c="#1020b0" w={2.500} dash="3 1" /></g>,
  ms2: <g><path d="M5 3v19L21 5" fill="none" stroke="#1020b0" strokeWidth="1.800" /><A d="M3 4h15M9 5l8 8" c={R} w={1.400} /><path d="M5 3h16l-4 4z" fill="#1020b0" /></g>,
  ms3: <g><A d="M2 2c6 6 6 14 0 21" w={1.600} /><A d="M14 2c8 6 8 14 0 21" c="#1020b0" w={2} dash="3 2" /><A d="M14 12h9" c={R} w={2} /><D x={14} y={12} /></g>,
  ms4: <g><A d="M5 2c9 1 16 6 17 15" w={1.500} /><A d="m2 21 13-12" c={R} w={1.600} /><D x={2} y={21} /><path d="m11 7 7-2-2 8z" fill={R} /></g>,
  ms5: <g><circle cx="12" cy="12" r="10" fill="none" stroke="#222" strokeWidth="1.600" /><A d="M4 12h16" c={R} w={1.800} /><path d="m3 12 5-4v8zM21 12l-5-4v8z" fill={R} /></g>,

  v1: <g><path d="M2 2h10v12H2zM7 6h8v11H7z" fill="#f0f2fa" stroke="#28389c" /><A d="M4 5h7M4 8h4M9 9h5M9 12h5" c="#28389c" dash="1.500 1" /><Nodes /></g>,
  v2: <g><Holder /><Nodes /></g>,
  v3: <g><Cube k={.6} x={2} y={0} /><circle cx="4" cy="9" r="3" fill="#f8a040" stroke="#c02010" /><Nodes /></g>,
  v4: <g><Mill x={1} y={1} h={13} /><Feed x={8} y={4} /><Wrench x={9} y={9} /></g>,
  v5: <g><Mill x={1} y={1} h={14} /><Feed x={8} y={4} /><A d="M9 13l14 1M20 9 13 19" c="#c8a820" w={2.200} /><circle cx="11" cy="17" r="2" fill="none" stroke="#806010" strokeWidth="1.500" /><circle cx="16" cy="21" r="2" fill="none" stroke="#806010" strokeWidth="1.500" /></g>,
  v6: <g><Mill x={1} y={1} h={15} /><Feed x={8} y={4} /><Page x={9} y={9} k={.48} c="#2848b8" /><Page x={14} y={13} k={.48} c="#2848b8" /></g>,
  v7: <g><Mill g x={1} y={1} h={15} /><Feed x={8} y={4} c="#999" /><path d="M9 9h9v8H9zM14 13h9v9h-9z" fill="#b8b8b8" stroke="#888" /></g>,
  v8: <g><rect x="4" y="3" width="16" height="17" rx="1" fill="#ababab" stroke="#8a8a8a" /><rect x="9" y="1" width="7" height="4" fill="#999" /><path d="M11 8h12v14H11z" fill="#bdbdbd" stroke="#888" /><A d="M13 12h8M13 15h8M13 18h6" c="#888" /><path d="m1 14 4-5 3 5z" fill="#a06868" /></g>,
  v9: <g><Mill x={1} y={1} h={15} /><Feed x={8} y={4} /><A d="m11 11 12 12M23 11 12 22" c="#222" w={2.200} /></g>,
  v10: <g><Mill x={1} y={1} h={13} /><Feed x={8} y={4} /><rect x="10.500" y="9.500" width="12" height="12" fill="#fff" stroke="#182868" /><A d="M15 14h2v5M14 19h5" c="#0c1450" w={2} /><rect x="15" y="11" width="3" height="2" fill="#0c1450" /></g>,
  v11: <g><A d="m2 3 7 6" c="#2848b8" w={4.500} /><path d="m9 7 5 5-4 1-3-3z" fill="#ffe870" /><Mill x={9} y={11} h={12} /><A d="M15 14h8M15 17h5" c="#333" /></g>,
  w1: <g><path d="M1 5h12v11H1zM9 8h12v13H9z" fill="#f0f2fa" stroke="#28389c" /><A d="M3 9h5M3 12h5M11 12h8M11 15h8M11 18h8" c="#28389c" dash="1.500 1" /><Sun x={17} y={6} /></g>,
  w2: <g><Holder x={8} /><path d="M2 12h7v8l-4 3-3-3z" fill="#3858c0" stroke="#111c50" /><Sun x={7} y={7} /></g>,
  w3: <g><Cube k={.85} x={3} y={3} t="#a8bcfa" l="#6f8bf0" /><circle cx="5" cy="17" r="4" fill="#f8b050" stroke="#d02010" strokeWidth="1.500" /><Sun x={7} y={5} /></g>,
  w4: <g><Mill x={3} y={7} h={16} /><Feed x={9} y={10} /><Sun x={10} y={6} /></g>,
  w5: <g><Mill x={4} y={2} h={17} /><Feed x={10} y={5} c="#222" /><Sun x={5} y={19} /></g>,
  w6: <g><A d="M2 3h6v5H2v5h6v5H2" c="#989898" w={1.800} /><Wrench x={9} y={7} c="#b0aaa0" s="#8a8478" /></g>,
  w7: <g><path d="m4 11 9-3 10 4v8l-9 4-10-4z" fill="#f8c830" stroke="#c07000" /><path d="M8 13h4v7H8z" fill="#f03020" /><path d="M16 12h4v8h-4z" fill="#30c0f0" /><Mill x={12} y={4} h={14} /><A d="m1 5 3 4 6-7" c="#10b020" w={2.500} /></g>,
  w8: <g><Swirl /><Page x={12} y={8} k={.65} c="#2858b8" /><A d="M12 3c4 0 5 2 5 5" c="#f05010" w={2} /><path d="m13 6 7 0-3 4z" fill="#f05010" /></g>,
  w9: <g><path d="M2 10h14v11H2z" fill="#c8ccd4" stroke="#555" /><path d="M5 12h5v7H5z" fill="#eef" stroke="#668" /><path d="M16 12h3v8h-3zM19 18c4-2 3 3 4 4" fill="#ddd" stroke="#555" /><A d="m2 4 3 4 6-7" c="#10b020" w={2.500} /></g>,
  l1: <g><Swirl /><A d="m13 12 6-6" c="#2050c0" w={5} /><path d="m11 9 5 5-4 1-2-2z" fill="#ffe870" stroke="#777" strokeWidth=".6" /><A d="m18 6 5-4" c="#2050c0" w={3} /></g>,
  l2: <g><Swirl /><A d="M13 21c-1-7 6-7 8-3" c="#18204c" w={1.800} /><path d="m17 20 6-5v7z" fill="#18204c" /></g>,
  l3: <g><Hatch /><A d="M4 9h15" c="#1020c0" w={1.400} /><path d="m15 6 6 3-6 3z" fill="#1020c0" /></g>,
  l4: <g><Hatch /><A d="M3 5v6M8 4h12M21 12V7" c={R} w={1.400} /><path d="m4 4 5-3v6zM0 8l3 5 3-5zM18 9l3-5 3 5z" fill={R} /></g>,
  l5: <g><circle cx="12" cy="11" r="10" fill="none" stroke="#111" strokeWidth="1.400" /><path d="m12 7 1 3 4 1-4 1-1 4-1-4-4-1 4-1z" fill={R} /></g>,
  l6: <g><A d="M3 21c14 0 2-18 17-19" w={1.800} /><D x={3} y={21} r={2.700} /><D x={12} y={11} r={2.500} /><D x={20} y={3} r={2.700} /></g>,
  l7: <g><rect x="1" y="1" width="19" height="19" fill="#fff" stroke="#1010c8" strokeWidth="1.600" /><rect x="4.500" y="4.500" width="12" height="12" fill="none" stroke="#1010c8" strokeWidth="1.300" /><rect x="7.500" y="7.500" width="6" height="6" fill="none" stroke="#b010b0" strokeWidth="1.300" /><circle cx="11" cy="5" r="2" fill="none" stroke="#f08020" strokeWidth="1.300" /><A d="M2 10h7" c="#10b010" /><Palette /></g>,
  l8: <g><A d="M2 1v19M2 4h4M2 10h4M2 16h4" c="#10108c" w={1.400} /><g fill="#fff080" stroke="#10108c"><rect x="6" y="2" width="4" height="4" /><rect x="6" y="8" width="4" height="4" /><rect x="6" y="14" width="4" height="4" /></g><A d="M12 4h7M12 10h7" c="#888" /><Palette /></g>,
  l9: <g><path d="M1 4h6v11H1z" fill="#3c64c0" stroke="#122058" /><path d="m1 13 6-8" stroke="#fff" strokeWidth="2" /><rect x="9" y="1" width="5" height="9" fill="#50586c" stroke="#222" strokeWidth=".8" /><rect x="7.500" y="8.500" width="4" height="4" fill="#f8e060" stroke="#604000" /><Palette /></g>,
  l10: <g><rect x="15" y="1" width="7" height="5" fill="#f03010" /><rect x="15" y="4" width="7" height="3" fill="#f89018" /><rect x="15" y="7" width="7" height="5" fill="#f8f020" /><rect x="15" y="12" width="7" height="6" fill="#30d040" /><rect x="15" y="18" width="7" height="2" fill="#20c0e0" /><rect x="15" y="20" width="7" height="3" fill="#1850f0" /><path d="m1 7 4-4 15 14-4 4z" fill="#f8ec80" stroke="#908018" /><A d="m6 7 10 10" c="#c03030" dash="1.500 2" /></g>,
  mfeed: <g><Mill x={8} y={0} h={17} /><Feed x={14} y={4} /><Sun x={6} y={19} /></g>,
};

/* ---------- toolbar pieces ---------- */
const Ic = ({ n, size = 'size-6' }: { n: string; size?: string }) => (
  <svg viewBox="0 0 24 24" className={`${size} shrink-0 overflow-visible`} aria-hidden="true">{ICON[n]}</svg>
);
const Btn = ({ n, on }: { n: string; on?: boolean }) => (
  <button
    type="button"
    aria-label={n}
    className={`flex size-[31px] shrink-0 items-center justify-center rounded-[3px] ${on ? 'border border-[#666] bg-white' : ''}`}
  >
    <Ic n={n} />
  </button>
);
const Caret = ({ low }: { low?: boolean }) => (
  <button type="button" aria-label="more" className={`flex shrink-0 items-center justify-center self-stretch ${low ? 'w-3.5 pt-3' : 'w-3'}`}>
    <span className="border-x-[3px] border-t-[3px] border-x-transparent border-t-black" />
  </button>
);
const Grip = ({ first }: { first?: boolean }) => (
  <span className={`flex w-2 shrink-0 items-center justify-end self-stretch pr-0.5 ${first ? '' : 'border-l border-[#aeaeae] shadow-[inset_1px_0_0_#f4f4f4]'}`}>
    <span className="h-[22px] w-0.5 bg-[repeating-linear-gradient(to_bottom,#9d9d9d_0_2px,transparent_2px_4px)]" />
  </span>
);
const Sep = () => (
  <span className="flex w-1.5 shrink-0 justify-center self-stretch py-0.5">
    <span className="w-0.5 border-l border-[#b0b0b0] bg-[#f4f4f4]" />
  </span>
);

/* "|" separator, "v" caret, "V" low caret, "g" grip */
const Items = ({ list }: { list: string }) => (
  <>
    {list.split(' ').map((k, i) =>
      k === '|' ? <Sep key={i} /> : k === 'v' ? <Caret key={i} /> : k === 'V' ? <Caret key={i} low /> : k === 'g' ? <Grip key={i} /> : <Btn key={i} n={k} on={k === 'chain'} />,
    )}
  </>
);

const Bar = ({ children, className }: { children: React.ReactNode; className: string }) => (
  <div role="toolbar" className={`flex shrink-0 items-center overflow-hidden border-b border-[#b0b0b0] shadow-[inset_0_1px_0_#f3f3f3] ${className}`}>
    {children}
  </div>
);

const menus: [string, string][] = [
  ['文件', 'F'], ['编辑', 'E'], ['视图', 'V'], ['插入', 'S'], ['格式', 'R'], ['工具', 'T'], ['装配', 'A'], ['信息', 'I'],
  ['分析', 'L'], ['首选项', 'P'], ['窗口', 'O'], ['GC工具箱', ''], ['星空 V6.936F', ''], ['帮助', 'H'],
];

const Picker = ({ label, value, className }: { label: string; value: string; className: string }) => (
  <label className={`relative block h-[19px] shrink-0 ${className}`}>
    <select
      aria-label={label}
      defaultValue={value}
      className="h-full w-full appearance-none rounded-[2px] border border-[#777] bg-white pl-px text-[12px] leading-4 text-black"
    >
      <option>{value}</option>
    </select>
    <span className="pointer-events-none absolute inset-y-px right-px flex w-4 items-center justify-center border border-[#4a80c8] bg-linear-to-b from-[#d6e8fb] to-[#7fb2ee]">
      <span className="border-x-[5px] border-t-[6px] border-x-transparent border-t-black" />
    </span>
  </label>
);

const SmallBtns = ({ list, width = 'w-[23px]' }: { list: string; width?: string }) => (
  <>
    {list.split(' ').map((k) => (
      <button key={k} type="button" aria-label={k} className={`flex ${width} shrink-0 items-center justify-center`}>
        <Ic n={k} size="size-4" />
      </button>
    ))}
  </>
);

/* ---------- left tool columns ---------- */
const SideGrip = () => (
  <span className="flex h-2 items-center justify-center shadow-[inset_0_1px_0_#f4f4f4]">
    <span className="h-0.5 w-[22px] bg-[repeating-linear-gradient(to_right,#9d9d9d_0_2px,transparent_2px_4px)]" />
  </span>
);
const SideGroup = ({ list, on = '' }: { list: string; on?: string }) => (
  <div role="toolbar" className="flex flex-col border-r border-b border-[#b4b4b4] pl-px">
    <SideGrip />
    {list.split(' ').map((k, i) =>
      k === '|' ? (
        <span key={i} className="flex h-1.5 items-center px-0.5"><span className="h-0.5 w-full border-t border-[#aaa] bg-[#f4f4f4]" /></span>
      ) : (
        <Btn key={k} n={k} on={on.split(' ').includes(k)} />
      ),
    )}
    <button type="button" aria-label="more" className="flex h-[13px] items-center pl-[7px]">
      <span className="border-y-[3px] border-r-[3px] border-y-transparent border-r-black" />
    </button>
  </div>
);

/* ---------- operation navigator ---------- */
type Row = { g: string; st?: 'warn' | 'ok'; t: string; sel?: boolean; cells?: string[]; path?: 'wrench' | 'check' };
const sub = (n: number, st: 'warn' | 'ok', g: string): Row => ({ g, st, t: `顶级刀路-00${n}` });
const rows: Row[] = [
  { g: '', t: 'NC_PROGRAM' },
  { g: 's', t: '未用项' },
  { g: 'e', st: 'warn', t: 'PROGRAM' },
  { g: ' e', st: 'warn', t: 'TOP' },
  sub(101, 'warn', '  E'),
  { g: '  |L', st: 'warn', t: 'ZLEVEL_PRO...', sel: true, cells: ['D12', '0', '0.0000', '0.0000', '', 'MCS', '2000 ...'], path: 'wrench' },
  sub(102, 'warn', '  E'),
  { g: '  |L', st: 'warn', t: 'DSX_COPY_...', sel: true, cells: ['D12', '0', '0.0000', '0.0000', '', 'MCS', '2500 ...'], path: 'check' },
  sub(103, 'warn', '  T'), sub(104, 'warn', '  T'), sub(105, 'ok', '  T'), sub(106, 'ok', '  T'),
  sub(107, 'ok', '  T'), sub(108, 'ok', '  T'), sub(109, 'ok', '  L'),
  ...Array.from({ length: 19 }, () => ({ g: '', t: '' })),
];
const guide: Record<string, string> = {
  ' ': '', s: 'M9.500 10V20M10 10.500H19', e: 'M9.500 0V5M15 10.500H19', E: 'M9.500 0V5M9.500 15V20M15 10.500H19',
  '|': 'M9.500 0V20', L: 'M9.500 0V10M10 10.500H19', T: 'M9.500 0V20M10 10.500H19',
};
const Guide = ({ k }: { k: string }) => (
  <svg viewBox="0 0 19 20" className="h-5 w-[19px] shrink-0" aria-hidden="true">
    <path d={guide[k]} stroke="#8c8c8c" strokeDasharray="1 1" fill="none" />
    {(k === 'e' || k === 'E') && (
      <g stroke="#777"><rect x="5.500" y="6.500" width="8" height="8" rx="1" fill="#fff" /><path d="M7 10.500h5" stroke="#222" /></g>
    )}
  </svg>
);
const Check = () => <path d="M2 9l2-1.500 2.500 2.500L12 3l2 .5L7 14H6z" fill="#14c832" stroke="#0a9a24" strokeWidth=".6" />;
const Status = ({ st }: { st: 'warn' | 'ok' }) => (
  <svg viewBox="0 0 18 18" className="h-[18px] w-[18px] shrink-0" aria-hidden="true">
    {st === 'warn' ? (
      <g fill="#fbe01c" stroke="#a88a00" strokeWidth=".8"><path d="M6 4c0-4 6-4 6 0l-2 8H8z" /><ellipse cx="9" cy="15" rx="2.200" ry="1.600" /></g>
    ) : (
      <g transform="translate(1 1)"><Check /></g>
    )}
  </svg>
);
const Folder = () => (
  <svg viewBox="0 0 16 16" className="size-4 shrink-0" aria-hidden="true">
    <path d="M.5 2.500h5l1 2h7v10H.5z" fill="#fbeea8" stroke="#8c7434" />
    <path d="M7 7.500h4.500v2.500H8M11.500 10v2.500H7" fill="none" stroke="#1212e0" strokeWidth="1.300" />
  </svg>
);
const OpIcon = () => (
  <svg viewBox="0 0 15 16" className="h-4 w-[15px] shrink-0" aria-hidden="true">
    <path d="M0 2h4v3c0 5 3 7 6 7v3C4 15 0 11 0 6z" fill="#148068" stroke="#222" strokeWidth=".7" />
    <path d="M6 1h5v9H6z" fill="#5a68d8" /><path d="M6 4h5M6 7h5" stroke="#1c2880" />
    <path d="M10 10.500h5M11 13.500h4" stroke="#1010d8" />
  </svg>
);
const heads = ['名称', '刀具', '刀.', '余量', '底面...', '刀', 'M...', '进给'];

const Navigator = () => (
  <section className="flex w-[535px] shrink-0 flex-col bg-[#ebebeb] pr-[10px] pl-1">
    <div className="flex h-[22px] shrink-0 items-center pl-[5px]">
      <span className="h-0.5 w-[484px] bg-[repeating-linear-gradient(to_right,#a8a8a8_0_2px,transparent_2px_4px)]" />
      <button type="button" aria-label="collapse" className="ml-[5px] flex w-3 justify-center">
        <span className="border-x-[4px] border-b-[4px] border-x-transparent border-b-[#888]" />
      </button>
      <button type="button" aria-label="close" className="ml-1 flex w-4 justify-center">
        <svg viewBox="0 0 8 8" className="size-2"><path d="m1 1 6 6M7 1 1 7" stroke="#000" strokeWidth="1.800" /></svg>
      </button>
    </div>
    <div className="min-h-0 flex-1 overflow-hidden border border-b-0 border-[#6c6c6c] bg-white">
      <table className="w-full table-fixed border-separate border-spacing-0 text-[12px] leading-4 text-[#2b2b2b]">
        <colgroup>
          <col className="w-[196px]" /><col className="w-[69px]" /><col className="w-7" /><col className="w-[59px]" />
          <col className="w-[51px]" /><col className="w-[23px]" /><col className="w-[37px]" /><col className="w-14" />
        </colgroup>
        <thead>
          <tr>
            {heads.map((h, i) => (
              <th key={i} scope="col" className="h-5 overflow-hidden border-r border-b border-[#a0a0a0] bg-linear-to-b from-[#f6f7f7] to-[#d6d8da] py-0 pr-0 pl-1.5 text-left font-normal whitespace-nowrap text-black shadow-[inset_1px_0_0_#fff]">
                {h}
              </th>
            ))}
          </tr>
        </thead>
        <tbody>
          {rows.map((r, i) => (
            <tr key={i} className={i % 2 ? 'bg-[#f7f7f7]' : 'bg-white'}>
              <td className="h-5 border-r border-b border-[#e4e4e4] p-0">
                <div className="flex h-[19px] items-center overflow-hidden">
                  {r.g.split('').map((k, j) => <Guide key={j} k={k} />)}
                  {r.st && <Status st={r.st} />}
                  {r.g === 's' && <span className="w-0.5" />}
                  {r.g !== '' && (r.sel ? <OpIcon /> : <Folder />)}
                  <span className={`whitespace-nowrap ${r.sel ? 'flex h-full flex-1 items-center bg-[#0078d7] pl-[3px] text-white' : r.g ? 'pl-px' : 'pl-1'}`}>{r.t}</span>
                </div>
              </td>
              {Array.from({ length: 7 }, (_, j) => (
                <td key={j} className={`h-5 overflow-hidden border-r border-b border-[#e4e4e4] py-0 pr-0 pl-1 text-[13px] whitespace-nowrap ${r.sel ? 'bg-[#0078d7] text-white' : ''}`}>
                  {r.path && j === 4 ? (
                    <svg viewBox="0 0 16 16" className="size-4" role="img" aria-label={r.path}>
                      {r.path === 'check' ? <Check /> : <Wrench x={1} y={1} c="#ffd820" s="#906000" />}
                    </svg>
                  ) : r.cells?.[j]}
                </td>
              ))}
            </tr>
          ))}
        </tbody>
      </table>
    </div>
  </section>
);

/* ---------- graphics window ---------- */
const Viewport = () => (
  <main className="relative min-w-0 flex-1 overflow-hidden bg-linear-to-b from-[#232426] to-[#58595b]">
    <svg viewBox="603 207 715 720" preserveAspectRatio="xMinYMin slice" className="absolute inset-0 h-full w-full" role="img" aria-label="toolpath">
      <path d="M603 268.500H1318" stroke="#8f8592" />
      <path
        d="M768 480.500H860A252 252 0 0 0 1318 626H1330V940H905.500V786C905 765 898 752 883 738L854 709A350 350 0 0 1 768 480.500z"
        fill="#a3376c" stroke="#2a2a2c" strokeWidth="1.200"
      />
      <path d="M747 481H766C768 565 796 643 852 709.500H833A368 368 0 0 1 747 481z" fill="#0f0" />
      <path d="M766 481A349 349 0 0 0 852 710" fill="none" stroke="#0ff" strokeWidth="3.500" />
      <path d="M862 481H889A228 228 0 0 0 932 620A248 248 0 0 0 1040 708.500L1012 710A252 252 0 0 1 862 481z" fill="#0f0" />
      <path d="M862.500 481A250 250 0 0 0 1011 709" fill="none" stroke="#0ff" strokeWidth="4" />
      <path d="M910.500 430V473" stroke="#0000ff" />
      <path d="M884 480.500H892C902 480.500 910 478 910.500 473" fill="none" stroke="#f8c000" strokeWidth="1.200" />
      <path d="M1055.500 430V697" stroke="#0000f0" strokeDasharray="8 8" />
      <path d="M1012 709.500H1041C1050 708.500 1055 706 1055.500 701" fill="none" stroke="#fbd6e0" strokeWidth="1.200" />
      <path d="M1112 478V390" stroke="#0a3cf0" strokeWidth="2" />
      <path d="M1108 397L1111.500 377L1116 397z" fill="#0a46ff" />
      <path d="M1114 480H1198" stroke="#2c9a2c" strokeWidth="2" />
      <path d="M1195 477L1216 480L1195 483z" fill="#2ea02e" />
      <circle cx="1112" cy="480" r="3" fill="#a81818" />
      <g fontSize="13" style={{ fontFamily: '"Liberation Sans", sans-serif' }}>
        <text x="1116" y="375" fill="#0a46ff">ZM</text>
        <text x="1113" y="480" fill="#d83434">XM</text>
        <text x="1198" y="476" fill="#2ea02e">YM</text>
        <text x="664" y="927" fill="#0a46ff">Z</text>
      </g>
    </svg>
    <div className="absolute right-6 bottom-3 flex items-center gap-2">
      <svg viewBox="0 0 72 82" className="h-[82px] w-[72px]" aria-hidden="true">
        <g stroke="#a3376c" strokeWidth="1">
          <path d="M15 13 36 0 54 10C56 18 56 24 54 29C46 17 32 11 15 13z" fill="#b08fb8" />
          <path d="M50 8 71 20V38C69 45 64 49 56 52C57 36 57 20 50 8z" fill="#6a79b4" />
          <path d="M71 38V62L55 71C48 70 41 67 38 65C55 61 66 52 71 38z" fill="#5069aa" />
          <path d="M57 70 36 82 22 74C17 68 16 60 17 54C28 66 40 71 57 70z" fill="#4f70b4" />
          <path d="M0 44C4 35 9 31 16 29C15 46 16 62 22 74L0 61z" fill="#7c7db4" />
          <path d="M0 45V20L14 13C24 13 30 15 35 18C18 22 6 31 0 45z" fill="#9088b6" />
        </g>
        <path d="M36 23 52 32 36 41 20 32z" fill="#978cb9" />
        <path d="M20 33 35.500 42V59L20 50z" fill="#7a80b8" />
        <path d="M52 33 36.500 42V59L52 50z" fill="#4d6cac" />
      </svg>
      <div className="flex flex-col gap-1 font-bold whitespace-nowrap text-[#d29bb9]">
        <div className="flex h-10 items-center gap-1">
          <span className="font-['Liberation_Sans'] text-[46px] leading-10">3D</span>
          <span className="text-[38px] leading-10">世界网</span>
        </div>
        <span className="font-['DejaVu_Sans'] text-[17px] leading-5">WWW.3DSJW.COM</span>
      </div>
    </div>
  </main>
);

export default function App() {
  return (
    <div className="flex h-screen flex-col overflow-hidden bg-[#d8d8d8] font-['Noto_Sans','Noto_Sans_CJK_SC',sans-serif] text-[12px] text-black">
      <header className="flex h-[26px] shrink-0 items-center gap-1 border-t-[3px] border-b border-t-[#50525a] border-b-black bg-[#1c1c1c] pl-[3px] text-[#747474]">
        <Ic n="nx" size="size-4" />
        <h1 className="whitespace-pre">NX 10 - 加工 - [UG编程N次视图修剪的全新概念——连PowerMILL都没有具备的顶级功能.prt （修改的） ]</h1>
      </header>
      <nav className="flex h-[26px] shrink-0 items-center border-b border-[#b0b0b0] bg-linear-to-b from-[#e9e9e9] to-[#e0e0e0]">
        <Grip first />
        <Ic n="mfeed" size="size-4" />
        <ul className="flex items-center gap-3 pl-[5px]">
          {menus.map(([t, k]) => (
            <li key={t} className={k === 'P' ? 'pl-2' : ''}>
              <button type="button" className="whitespace-nowrap">
                {t}{k && <>(<u>{k}</u>)</>}
              </button>
            </li>
          ))}
        </ul>
      </nav>
      <Bar className="h-[34px] bg-linear-to-b from-[#e2e2e2] to-[#d8d8d8]">
        <Grip first />
        <button type="button" className="flex w-[67px] shrink-0 items-center gap-1 pl-[3px]">
          <Ic n="nx" />
          <span>启动</span>
          <span className="border-x-[3px] border-t-[3px] border-x-transparent border-t-black" />
        </button>
        <Items list="new open save print | undo v redo | fit win V g cube1 cube2 cube3 cube4 cube5 | door door2 V g chain | line axl para perp tanc tan2 cur1 cur2 mesh | arc3 arct arcb arcr | c3 ct cb cr | cc cd ce V g pen" />
      </Bar>
      <Bar className="h-[34px] bg-linear-to-b from-[#dddddd] to-[#d2d2d2]">
        <Grip first />
        <Items list="refresh grids toolcol mill1 mill2 mill3 mill4 zig millw mach1 mach2 mach3 gearw annot eraser dwg pages teal sunpg print swap tools calc clock V g bline barc brect bigA off1 off2 off3 pj1 pj2 sf1 sf2 wrapc V g wpage tr1 tr2 tr3 tr4" />
      </Bar>
      <Bar className="h-[35px] border-b-2 border-[#999] bg-linear-to-b from-[#d8d8d8] to-[#cacaca] pl-px">
        <Grip first />
        <Items list="fold1 fold2 redbox layers v mo yi ribs wenben green v abs xdim books left right fit win pillar cubeR purp rarc wirec ygc vise swatch info cylm redc xc v trm mir1 mir2 mir3 rect v hex v xyz ctr ring text wire2 lamp clip" />
      </Bar>
      <Bar className="h-[30px] bg-linear-to-b from-[#c8c8c8] to-[#dadada]">
        <Picker label="选择过滤器" value="无选择过滤器" className="ml-[5px] w-[147px]" />
        <Picker label="选择范围" value="整个装配" className="ml-2 w-[155px]" />
        <span className="w-1 shrink-0" />
        <SmallBtns list="g1" />
        <Sep />
        <SmallBtns list="g2" width="w-5" />
        <SmallBtns list="rf" />
        <Caret />
        <SmallBtns list="snap1 snap2" />
        <Sep />
        <SmallBtns list="selr" />
        <Caret />
        <Sep />
        <SmallBtns list="sm1 sm2 sm3 sa1 sa2 sa3 sa4 sa5 sa6 ms1 ms2 ms3 ms4 ms5" />
      </Bar>
      <div className="flex h-[22px] shrink-0 border-b-2 border-[#999] bg-[#dadada] shadow-[inset_0_1px_0_#f3f3f3]">
        <span className="w-[70%] border-r border-[#aaa]" />
        <span className="flex-1 border-l border-[#f3f3f3]" />
      </div>
      <div className="flex min-h-0 flex-1">
        <div className="flex w-[68px] shrink-0 items-start overflow-hidden bg-linear-to-b from-[#e2e2e2] to-[#cfcfcf]">
          <div className="w-[34px] shrink-0">
            <SideGroup list="v1 v2 v3" on="v1" />
            <SideGroup list="v4 v5 v6 v7 v8 v9 v10 v11" />
            <SideGroup list="l1 l2 l3 l4 l5 l6 l7 l8 l9 l10" on="l3 l4" />
          </div>
          <div className="w-[34px] shrink-0">
            <SideGroup list="w1 w2 w3 w4" />
            <SideGroup list="w5 w6 w7 w8 w9 | mach2" />
          </div>
        </div>
        <Navigator />
        <Viewport />
      </div>
    </div>
  );
}
